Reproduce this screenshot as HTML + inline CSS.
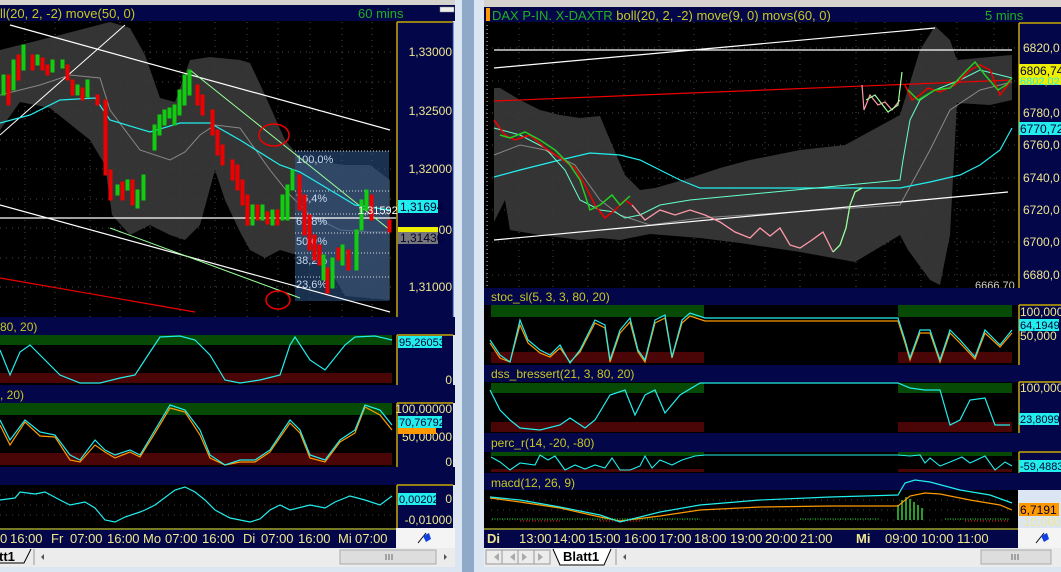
<!DOCTYPE html>
<html><head><meta charset="utf-8">
<style>
html,body{margin:0;padding:0;width:1061px;height:572px;overflow:hidden;background:#dce6f2;font-family:"Liberation Sans",sans-serif}
svg{position:absolute;left:0;top:0}
text{font-family:"Liberation Sans",sans-serif}
</style></head><body>
<svg width="1061" height="572" viewBox="0 0 1061 572" xmlns="http://www.w3.org/2000/svg">
<defs>
<pattern id="gd" width="40" height="24" patternUnits="userSpaceOnUse"><path d="M0 12h40" stroke="#555" stroke-width="1" stroke-dasharray="1,8"/></pattern>
</defs>
<!-- frames -->
<rect x="0" y="0" width="1061" height="572" fill="#dce6f2"/>
<rect x="0" y="0" width="455" height="5" fill="#d6d3ce"/>
<rect x="462" y="0" width="12" height="572" fill="#8fa9c9"/>
<rect x="484" y="0" width="577" height="7" fill="#d6d3ce"/>

<!-- ============ LEFT WINDOW ============ -->
<rect x="0" y="5" width="455" height="16" fill="#03074a"/>
<text x="0" y="18" font-size="13" fill="#c8c820">ll(20, 2, -2) move(50, 0)</text>
<text x="358" y="18" font-size="13" fill="#20b020">60 mins</text>
<rect x="440" y="7" width="14" height="5" fill="#eee" stroke="#888" stroke-width="0.5"/>
<rect x="0" y="21" width="396" height="296" fill="#000"/>
<!-- axis columns left -->
<rect x="396" y="21" width="57" height="296" fill="#03074a"/>
<path d="M397 22V317M397 22H453" stroke="#c8a800" stroke-width="1.5" fill="none"/>
<path d="M453 22V317" stroke="#2040a0" stroke-width="1"/>
<!-- grid -->
<g stroke="#4a4a4a" stroke-dasharray="1,5">
<path d="M25 22V317M55 22V317M90 22V317M120 22V317M150 22V317M180 22V317M215 22V317M247 22V317M278 22V317M310 22V317M342 22V317M372 22V317"/>
<path d="M0 52H396M0 82H396M0 111H396M0 140H396M0 169H396M0 199H396M0 228H396M0 258H396M0 287H396"/>
</g>
<!-- band -->
<polygon fill="#3a3a3a" opacity="0.9" points="0,50 60,35 110,22 130,28 145,55 160,98 175,102 190,60 210,57 240,60 250,63 265,95 285,140 300,158 330,163 345,165 370,165 390,180 390,300 345,296 330,270 300,256 280,250 265,258 250,250 240,232 225,200 215,170 200,225 185,240 170,235 150,225 130,235 112,215 105,165 90,140 50,108 20,102 0,130"/>
<polyline fill="none" stroke="#888" stroke-width="1" points="0,95 40,85 70,75 100,78 110,110 140,150 170,160 185,152 200,135 215,125 240,128 270,170 290,195 310,215 340,230 370,232 390,232"/>
<!-- fib box -->
<rect x="295" y="151" width="94" height="150" fill="#2e5a8e" opacity="0.55"/>
<g stroke="#ddd" stroke-dasharray="1,2"><path d="M295 151H389M295 191H389M295 214H389M295 233H389M295 253H389M295 277H389"/></g>
<g font-size="11" fill="#c8d8f0"><text x="296" y="163">100,0%</text><text x="296" y="202">76,4%</text><text x="296" y="225">61,8%</text><text x="296" y="245">50,0%</text><text x="296" y="264">38,2%</text><text x="296" y="288">23,6%</text></g>
<!-- lines -->
<path d="M10 25L390 130" stroke="#fff" stroke-width="1.2"/>
<path d="M0 205L390 312" stroke="#fff" stroke-width="1.2"/>
<path d="M0 135L125 25" stroke="#fff" stroke-width="1"/>
<path d="M0 218H396" stroke="#fff" stroke-width="1.2"/>
<path d="M110 228L300 298" stroke="#9f9" stroke-width="1"/>
<path d="M190 70L390 230" stroke="#9f9" stroke-width="1"/>
<path d="M0 278L195 312" stroke="#e00" stroke-width="1.2"/>
<polyline fill="none" stroke="#2ee" stroke-width="1.2" points="0,123 30,115 60,100 95,98 110,120 150,132 180,123 210,123 240,140 280,165 300,172 330,190 355,205 390,210"/>
<!-- candles left -->
<g stroke-width="1">
<g fill="#e00" stroke="#e00">
<rect x="7" y="75" width="3" height="30"/><rect x="17" y="55" width="3" height="25"/><rect x="31" y="55" width="3" height="15"/><rect x="41" y="58" width="3" height="12"/><rect x="46" y="65" width="3" height="10"/><rect x="66" y="65" width="3" height="15"/><rect x="71" y="80" width="3" height="15"/><rect x="81" y="88" width="3" height="12"/><rect x="96" y="95" width="3" height="10"/><rect x="104" y="100" width="3" height="75"/><rect x="109" y="170" width="3" height="30"/><rect x="121" y="182" width="3" height="18"/><rect x="131" y="180" width="3" height="25"/>
<rect x="196" y="85" width="3" height="20"/><rect x="201" y="95" width="3" height="20"/><rect x="211" y="110" width="3" height="25"/><rect x="216" y="130" width="3" height="25"/><rect x="221" y="145" width="3" height="20"/><rect x="231" y="160" width="3" height="20"/><rect x="236" y="165" width="3" height="25"/><rect x="241" y="180" width="3" height="25"/><rect x="246" y="195" width="3" height="30"/><rect x="256" y="205" width="3" height="15"/><rect x="266" y="212" width="3" height="12"/><rect x="276" y="210" width="3" height="15"/>
<rect x="298" y="175" width="3" height="35"/><rect x="303" y="195" width="3" height="40"/><rect x="308" y="215" width="3" height="35"/><rect x="313" y="235" width="3" height="25"/><rect x="318" y="245" width="3" height="20"/><rect x="326" y="268" width="3" height="25"/><rect x="337" y="248" width="3" height="12"/><rect x="347" y="250" width="3" height="20"/><rect x="370" y="195" width="3" height="25"/><rect x="388" y="220" width="3" height="12"/>
</g>
<g fill="#1c1" stroke="#1c1">
<rect x="2" y="75" width="3" height="20"/><rect x="12" y="60" width="3" height="30"/><rect x="22" y="45" width="3" height="25"/><rect x="36" y="55" width="3" height="10"/><rect x="51" y="60" width="3" height="12"/><rect x="61" y="60" width="3" height="8"/><rect x="76" y="85" width="3" height="10"/><rect x="86" y="80" width="3" height="17"/><rect x="116" y="185" width="3" height="10"/><rect x="126" y="180" width="3" height="10"/><rect x="136" y="190" width="3" height="18"/><rect x="142" y="175" width="3" height="25"/>
<rect x="153" y="125" width="3" height="25"/><rect x="158" y="115" width="3" height="20"/><rect x="163" y="110" width="3" height="15"/><rect x="168" y="108" width="3" height="10"/><rect x="173" y="105" width="3" height="20"/><rect x="178" y="90" width="3" height="25"/><rect x="183" y="75" width="3" height="30"/><rect x="188" y="70" width="3" height="25"/>
<rect x="251" y="205" width="3" height="20"/><rect x="261" y="205" width="3" height="15"/><rect x="271" y="210" width="3" height="15"/><rect x="281" y="195" width="3" height="25"/><rect x="286" y="185" width="3" height="35"/><rect x="291" y="170" width="3" height="20"/>
<rect x="322" y="255" width="3" height="25"/><rect x="331" y="258" width="3" height="30"/><rect x="341" y="245" width="3" height="20"/><rect x="355" y="230" width="3" height="40"/><rect x="360" y="200" width="3" height="30"/><rect x="365" y="190" width="3" height="20"/>
</g></g>
<ellipse cx="274" cy="135" rx="15" ry="11" fill="none" stroke="#e00" stroke-width="1.5"/>
<ellipse cx="278" cy="300" rx="12" ry="9" fill="none" stroke="#e00" stroke-width="1.5"/>
<!-- left axis labels -->
<g font-size="12" fill="#f0e68c" text-anchor="end"><text x="452" y="56">1,33000</text><text x="452" y="115">1,32500</text><text x="452" y="173">1,32000</text><text x="452" y="291">1,31000</text></g>
<rect x="398" y="200" width="40" height="13" fill="#2ee"/><text x="400" y="211" font-size="12" fill="#003">1,31694</text>
<rect x="398" y="227" width="40" height="10" fill="#ee0"/><text x="452" y="234" font-size="12" fill="#f0e68c" text-anchor="end">00</text>
<rect x="398" y="232" width="40" height="12" fill="#777"/><text x="400" y="242" font-size="12" fill="#003">1,31430</text>
<text x="358" y="214" font-size="11" fill="#fff">1,31592</text>

<!-- left panel 1 -->
<rect x="0" y="317" width="455" height="18" fill="#03074a"/>
<text x="0" y="331" font-size="12" fill="#c8c820">80, 20)</text>
<rect x="0" y="335" width="396" height="50" fill="#000"/>
<rect x="0" y="335" width="392" height="10" fill="#064a06"/>
<rect x="0" y="373" width="392" height="10" fill="#4a0606"/>
<rect x="396" y="335" width="57" height="50" fill="#03074a"/>
<path d="M397 335V385M397 335H453" stroke="#c8a800" stroke-width="1.5"/>
<polyline fill="none" stroke="#2ee" stroke-width="1.2" points="0,350 10,375 20,352 30,345 45,360 60,375 80,383 100,383 120,378 135,375 150,352 160,337 180,336 195,340 210,355 225,380 240,383 260,380 280,375 290,345 295,337 310,360 325,370 345,345 355,337 375,336 392,340"/>
<rect x="398" y="336" width="44" height="12" fill="#2ee"/><text x="399" y="346" font-size="11" fill="#003">95,26053</text>
<text x="452" y="384" font-size="12" fill="#f0e68c" text-anchor="end">0</text>
<!-- left panel 2 -->
<rect x="0" y="385" width="455" height="18" fill="#03074a"/>
<text x="0" y="399" font-size="12" fill="#c8c820">, 20)</text>
<rect x="0" y="403" width="396" height="64" fill="#000"/>
<rect x="0" y="403" width="392" height="12" fill="#064a06"/>
<rect x="0" y="453" width="392" height="12" fill="#4a0606"/>
<rect x="396" y="403" width="57" height="64" fill="#03074a"/>
<path d="M397 403V467M397 403H453" stroke="#c8a800" stroke-width="1.5"/>
<polyline fill="none" stroke="#f90" stroke-width="1.2" points="0,425 10,445 25,422 40,436 55,437 70,460 80,462 95,445 105,452 115,458 130,452 140,457 155,433 170,408 185,412 200,435 210,458 225,465 240,462 255,462 270,452 290,423 300,433 310,458 325,462 340,442 355,433 365,407 380,415 392,430"/>
<polyline fill="none" stroke="#2ee" stroke-width="1.2" points="0,420 10,440 25,420 40,432 55,435 70,455 80,460 95,440 105,450 115,455 130,450 140,455 155,430 170,405 185,410 200,430 210,455 225,465 240,460 255,460 270,450 290,420 300,430 310,455 325,460 340,440 355,430 365,405 380,410 392,425"/>
<text x="452" y="413" font-size="12" fill="#f0e68c" text-anchor="end">100,00000</text>
<text x="452" y="441" font-size="12" fill="#f0e68c" text-anchor="end">50,00000</text>
<rect x="398" y="426" width="38" height="8" fill="#f90"/>
<rect x="398" y="416" width="44" height="12" fill="#2ee"/><text x="399" y="426" font-size="11" fill="#003">70,76792</text>
<text x="452" y="466" font-size="12" fill="#f0e68c" text-anchor="end">0</text>
<!-- left macd -->
<rect x="0" y="467" width="455" height="18" fill="#03074a"/>
<rect x="0" y="485" width="396" height="43" fill="#000"/>
<path d="M0 495H392M0 505H392M0 515H392" stroke="#444" stroke-dasharray="1,5"/>
<rect x="396" y="485" width="57" height="43" fill="#03074a"/>
<path d="M397 485V528M397 485H453" stroke="#c8a800" stroke-width="1.5"/>
<polyline fill="none" stroke="#2ee" stroke-width="1.2" points="0,500 15,498 20,492 35,494 45,492 60,500 70,505 85,502 95,508 105,520 115,522 125,517 140,512 145,510 155,505 175,490 185,487 195,492 205,500 215,510 230,518 250,522 260,519 270,510 280,505 290,510 310,505 325,508 335,502 350,496 365,500 380,505 392,496"/>
<rect x="398" y="493" width="38" height="12" fill="#2ee"/><text x="399" y="503" font-size="11" fill="#003">0,00202</text>
<text x="452" y="503" font-size="12" fill="#f0e68c" text-anchor="end">0</text>
<text x="452" y="524" font-size="12" fill="#f0e68c" text-anchor="end">-0,01000</text>
<!-- left time axis -->
<rect x="0" y="528" width="396" height="20" fill="#03074a"/>
<path d="M0 529H396" stroke="#ee0" stroke-width="1"/>
<g font-size="13" fill="#f0e68c"><text x="0" y="543">0</text><text x="10" y="543">16:00</text><text x="51" y="543">Fr</text><text x="70" y="543">07:00</text><text x="107" y="543">16:00</text><text x="143" y="543">Mo</text><text x="165" y="543">07:00</text><text x="202" y="543">16:00</text><text x="243" y="543">Di</text><text x="261" y="543">07:00</text><text x="298" y="543">16:00</text><text x="338" y="543">Mi</text><text x="355" y="543">07:00</text></g>
<rect x="396" y="528" width="59" height="20" fill="#f4f4f4"/>
<path d="M418 543l8-10" stroke="#000"/><path d="M423 536l6-3 2 6-5 3z" fill="#1040e0"/>
<!-- left tabs -->
<rect x="0" y="548" width="455" height="19" fill="#ececec"/>
<path d="M0 563H24L31 549" stroke="#000" fill="none"/>
<text x="-1" y="561" font-size="13" font-weight="bold" fill="#000">tt1</text>
<path d="M34 549V565" stroke="#999"/>
<path d="M44 554l-3 3 3 3z" fill="#555"/>
<rect x="340" y="550" width="96" height="14" fill="#ddd" stroke="#aaa"/>
<path d="M386 554v6M389 554v6M392 554v6" stroke="#666"/>
<path d="M444 554l3 3-3 3z" fill="#555"/>

<!-- ============ RIGHT WINDOW ============ -->
<rect x="484" y="7" width="577" height="15" fill="#03074a"/>
<rect x="486" y="8" width="4" height="13" fill="#f90"/>
<text x="492" y="20" font-size="13" fill="#20b020">DAX P-IN. X-DAXTR <tspan fill="#c8c820">boll(20, 2, -2) move(9, 0) movs(60, 0)</tspan></text>
<text x="985" y="20" font-size="13" fill="#20b020">5 mins</text>
<rect x="484" y="22" width="534" height="266" fill="#000"/>
<rect x="1018" y="22" width="43" height="266" fill="#03074a"/>
<path d="M1019 23V288M1019 23H1061" stroke="#c8a800" stroke-width="1.5"/>
<g stroke="#4a4a4a" stroke-dasharray="1,5">
<path d="M519 22V288M553 22V288M588 22V288M624 22V288M659 22V288M694 22V288M730 22V288M765 22V288M800 22V288M856 22V288M885 22V288M921 22V288M957 22V288M994 22V288"/>
<path d="M486 48H1018M486 81H1018M486 113H1018M486 145H1018M486 178H1018M486 210H1018M486 242H1018M486 275H1018"/>
</g>
<path d="M487 25V288" stroke="#ccc" stroke-dasharray="1,3"/>
<polygon fill="#3a3a3a" opacity="0.9" points="494,88 500,88 520,100 540,110 560,115 580,118 600,116 610,140 625,175 640,190 655,188 690,178 720,168 750,160 800,150 845,145 900,115 920,50 935,26 950,40 957,60 1000,56 1012,55 1012,100 990,105 957,103 955,140 950,235 940,285 930,280 908,250 900,235 855,262 800,252 740,243 700,238 650,234 620,240 600,238 580,240 540,235 510,230 505,200 494,222"/>
<polyline fill="none" stroke="#888" points="494,155 520,145 545,150 575,165 600,200 620,215 650,225 700,218 900,205 930,150 950,110 980,90 1012,82"/>
<path d="M494 68L935 28" stroke="#fff" stroke-width="1.2"/>
<path d="M494 50H1012" stroke="#fff" stroke-width="1.2"/>
<path d="M494 240L1008 192" stroke="#fff" stroke-width="1.2"/>
<path d="M494 101L1012 80" stroke="#e00" stroke-width="1.2"/>
<polyline fill="none" stroke="#2ee" stroke-width="1.2" points="494,177 520,170 560,160 590,153 620,155 640,160 660,170 680,180 700,188 900,188 930,182 960,175 980,165 1000,150 1012,128"/>
<polyline fill="none" stroke="#6fc" stroke-width="1" points="494,128 520,135 545,148 565,170 580,200 600,210 615,212 625,218 640,215 660,205 690,200 900,180 903,160 910,120 920,100 935,90 960,80 980,70 1000,75 1012,78"/>
<polyline fill="none" stroke="#e00" stroke-width="1.5" points="494,120 505,135 515,140 530,135 545,148 560,158 575,168 585,185 595,205 605,218 615,210 625,200 632,205"/>
<polyline fill="none" stroke="#2c2" stroke-width="1.5" points="500,135 510,138 525,132 540,140 555,150 570,165 580,180 590,210 600,205 612,195 620,205 630,196"/>
<polyline fill="none" stroke="#f9a" stroke-width="1.3" points="632,205 645,220 660,210 675,215 690,210 705,215 720,222 735,232 750,238 760,228 770,236 780,228 790,245 800,248 812,240 823,232 833,252"/>
<polyline fill="none" stroke="#9f9" stroke-width="1.3" points="833,252 840,245 846,228 850,205 855,192 862,188"/>
<polyline fill="none" stroke="#f9a" stroke-width="1.2" points="862,85 864,110 870,95 878,105 885,102 892,110 900,100"/>
<polyline fill="none" stroke="#9f9" stroke-width="1.2" points="866,100 875,95 888,112 898,105 902,72"/>
<polyline fill="none" stroke="#e00" stroke-width="1.5" points="905,85 912,100 920,95 928,88 940,92 955,85 970,70 980,65 990,70 1000,95 1010,82"/>
<polyline fill="none" stroke="#2c2" stroke-width="1.5" points="908,90 918,100 935,90 950,88 965,72 975,62 985,75 998,90 1006,85 1012,78"/>
<g font-size="12" fill="#f0e68c"><text x="1023" y="52">6820,0</text><text x="1023" y="117">6780,0</text><text x="1023" y="149">6760,0</text><text x="1023" y="182">6740,0</text><text x="1023" y="214">6720,0</text><text x="1023" y="246">6700,0</text><text x="1023" y="279">6680,0</text></g>
<text x="975" y="289" font-size="11" fill="#ccc">6666,70</text>
<rect x="1019" y="75" width="42" height="10" fill="#ee0"/>
<rect x="1019" y="64" width="42" height="13" fill="#ee0"/><text x="1020" y="75" font-size="12" fill="#003">6806,74</text>
<text x="1020" y="85" font-size="11" fill="#2ee">6802,02</text>
<rect x="1019" y="122" width="42" height="13" fill="#2ee"/><text x="1020" y="133" font-size="12" fill="#003">6770,72</text>

<!-- right stoc -->
<rect x="484" y="288" width="577" height="17" fill="#03074a"/>
<text x="491" y="301" font-size="12" fill="#c8c820">stoc_sl(5, 3, 3, 80, 20)</text>
<rect x="484" y="305" width="534" height="60" fill="#000"/>
<rect x="491" y="305" width="213" height="12" fill="#064a06"/><rect x="898" y="305" width="114" height="12" fill="#064a06"/>
<rect x="491" y="352" width="213" height="11" fill="#4a0606"/><rect x="898" y="352" width="114" height="11" fill="#4a0606"/>
<rect x="1018" y="305" width="43" height="60" fill="#03074a"/>
<path d="M1019 305V365M1019 305H1061" stroke="#c8a800" stroke-width="1.5"/>
<polyline fill="none" stroke="#f90" stroke-width="1.2" points="490,343 500,358 510,362 520,325 528,343 540,353 550,357 560,348 570,362 580,352 595,323 605,328 610,362 620,333 630,322 638,352 645,362 655,323 665,318 672,358 682,323 690,316 705,321 898,321 905,343 910,360 920,333 930,333 940,362 950,333 960,343 975,359 985,333 1000,347 1012,333"/>
<polyline fill="none" stroke="#2ee" stroke-width="1.2" points="490,340 500,355 510,362 520,320 528,340 540,350 550,355 560,345 570,363 580,350 595,320 605,325 610,360 620,330 630,318 638,350 645,360 655,320 665,315 672,357 682,320 690,313 705,318 898,318 905,340 910,358 920,330 930,330 940,360 950,330 960,340 975,357 985,330 1000,345 1012,330"/>
<text x="1020" y="316" font-size="12" fill="#f0e68c">100,000</text>
<text x="1020" y="340" font-size="12" fill="#f0e68c">50,000</text>
<rect x="1019" y="319" width="40" height="12" fill="#2ee"/><text x="1020" y="329" font-size="11" fill="#003">64,1949</text>
<!-- dss -->
<rect x="484" y="365" width="577" height="17" fill="#03074a"/>
<text x="491" y="378" font-size="12" fill="#c8c820">dss_bressert(21, 3, 80, 20)</text>
<rect x="484" y="382" width="534" height="51" fill="#000"/>
<rect x="491" y="383" width="213" height="10" fill="#064a06"/><rect x="898" y="383" width="114" height="10" fill="#064a06"/>
<rect x="491" y="422" width="213" height="10" fill="#4a0606"/><rect x="898" y="422" width="114" height="10" fill="#4a0606"/>
<rect x="1018" y="382" width="43" height="51" fill="#03074a"/>
<path d="M1019 382V433M1019 382H1061" stroke="#c8a800" stroke-width="1.5"/>
<polyline fill="none" stroke="#2ee" stroke-width="1.2" points="490,390 500,410 510,420 520,428 540,430 560,425 570,418 585,428 595,420 610,395 625,390 635,415 645,395 655,390 665,413 680,395 700,383 898,383 910,388 925,390 940,390 950,425 960,420 970,400 985,398 995,425 1010,425"/>
<text x="1020" y="392" font-size="12" fill="#f0e68c">100,000</text>
<rect x="1019" y="413" width="40" height="12" fill="#2ee"/><text x="1020" y="423" font-size="11" fill="#003">23,8099</text>
<!-- perc -->
<rect x="484" y="433" width="577" height="19" fill="#03074a"/>
<text x="491" y="447" font-size="12" fill="#c8c820">perc_r(14, -20, -80)</text>
<rect x="484" y="452" width="534" height="21" fill="#000"/>
<rect x="491" y="452" width="213" height="4" fill="#064a06"/><rect x="898" y="452" width="114" height="4" fill="#064a06"/>
<rect x="491" y="469" width="213" height="3" fill="#4a0606"/><rect x="898" y="469" width="114" height="3" fill="#4a0606"/>
<rect x="1018" y="452" width="43" height="21" fill="#03074a"/>
<path d="M1019 452V473M1019 452H1061" stroke="#c8a800" stroke-width="1.5"/>
<polyline fill="none" stroke="#2ee" stroke-width="1.1" points="491,457 500,462 510,470 520,463 535,465 540,455 548,460 555,456 565,470 575,465 585,469 595,465 605,468 612,458 620,470 630,470 640,466 645,456 652,468 660,460 672,465 682,460 695,456 705,455 898,455 910,456 920,455 925,463 930,458 940,466 950,462 962,457 970,463 985,456 995,470 1005,462 1012,466"/>
<rect x="1019" y="460" width="42" height="12" fill="#2ee"/><text x="1020" y="470" font-size="11" fill="#003">-59,4883</text>
<!-- macd -->
<rect x="484" y="473" width="577" height="17" fill="#03074a"/>
<text x="491" y="487" font-size="12" fill="#c8c820">macd(12, 26, 9)</text>
<rect x="484" y="490" width="534" height="38" fill="#000"/>
<path d="M491 500H1012M491 510H1012M491 520H1012" stroke="#444" stroke-dasharray="1,5"/>
<path d="M492 519H700M800 519H880M945 519H1010" stroke="#1a7a1a" stroke-width="2" stroke-dasharray="1,1.5"/>
<path d="M898 505V520M902 500V520M906 497V520M910 499V520M914 502V520M918 505V520M922 508V520" stroke="#2a9a2a" stroke-width="2"/>
<path d="M520 521H560M600 521H640M965 521H1010" stroke="#8a1010" stroke-width="2" stroke-dasharray="1,2"/>
<polyline fill="none" stroke="#f90" stroke-width="1.2" points="490,498 520,502 560,508 600,517 620,521 660,516 700,510 760,507 830,506 898,506 910,496 925,493 940,494 970,500 1000,505 1012,510"/>
<polyline fill="none" stroke="#2ee" stroke-width="1.2" points="490,497 520,500 560,507 600,515 620,522 660,512 700,505 760,500 830,497 898,495 905,483 915,480 930,482 960,490 990,495 1012,503"/>
<rect x="1019" y="503" width="40" height="13" fill="#f90"/><text x="1020" y="514" font-size="12" fill="#003">6,7191</text>
<text x="1020" y="526" font-size="12" fill="#f0e68c">-10,000</text>
<!-- right time axis -->
<rect x="484" y="528" width="534" height="20" fill="#03074a"/>
<path d="M484 529H1018" stroke="#ee0"/>
<g font-size="13" fill="#f0e68c"><text x="487" y="543" font-weight="bold">Di</text><text x="519" y="543">13:00</text><text x="553" y="543">14:00</text><text x="588" y="543">15:00</text><text x="624" y="543">16:00</text><text x="659" y="543">17:00</text><text x="694" y="543">18:00</text><text x="730" y="543">19:00</text><text x="765" y="543">20:00</text><text x="800" y="543">21:00</text><text x="856" y="543" font-weight="bold">Mi</text><text x="885" y="543">09:00</text><text x="921" y="543">10:00</text><text x="957" y="543">11:00</text></g>
<rect x="1018" y="528" width="43" height="20" fill="#f4f4f4"/>
<path d="M1036 543l8-10" stroke="#000"/><path d="M1041 536l6-3 2 6-5 3z" fill="#1040e0"/>
<!-- right tabs -->
<rect x="484" y="548" width="577" height="19" fill="#ececec"/>
<g stroke="#999" fill="none"><rect x="486" y="550" width="16" height="14"/><rect x="502" y="550" width="16" height="14"/><rect x="518" y="550" width="16" height="14"/><rect x="534" y="550" width="16" height="14"/></g>
<g fill="#aaa"><path d="M499 553l-5 4 5 4zM515 553l-5 4 5 4zM522 553l5 4-5 4zM538 553l5 4-5 4z"/></g>
<path d="M553 549L560 565H604L611 549" stroke="#000" fill="#fff"/>
<text x="563" y="561" font-size="13" font-weight="bold" fill="#000">Blatt1</text>
<path d="M616 549V565" stroke="#999"/>
<path d="M626 554l-3 3 3 3z" fill="#555"/>
<rect x="981" y="550" width="70" height="14" fill="#ddd" stroke="#aaa"/>
<path d="M1012 554v6M1015 554v6M1018 554v6" stroke="#666"/>
</svg>
</body></html>
